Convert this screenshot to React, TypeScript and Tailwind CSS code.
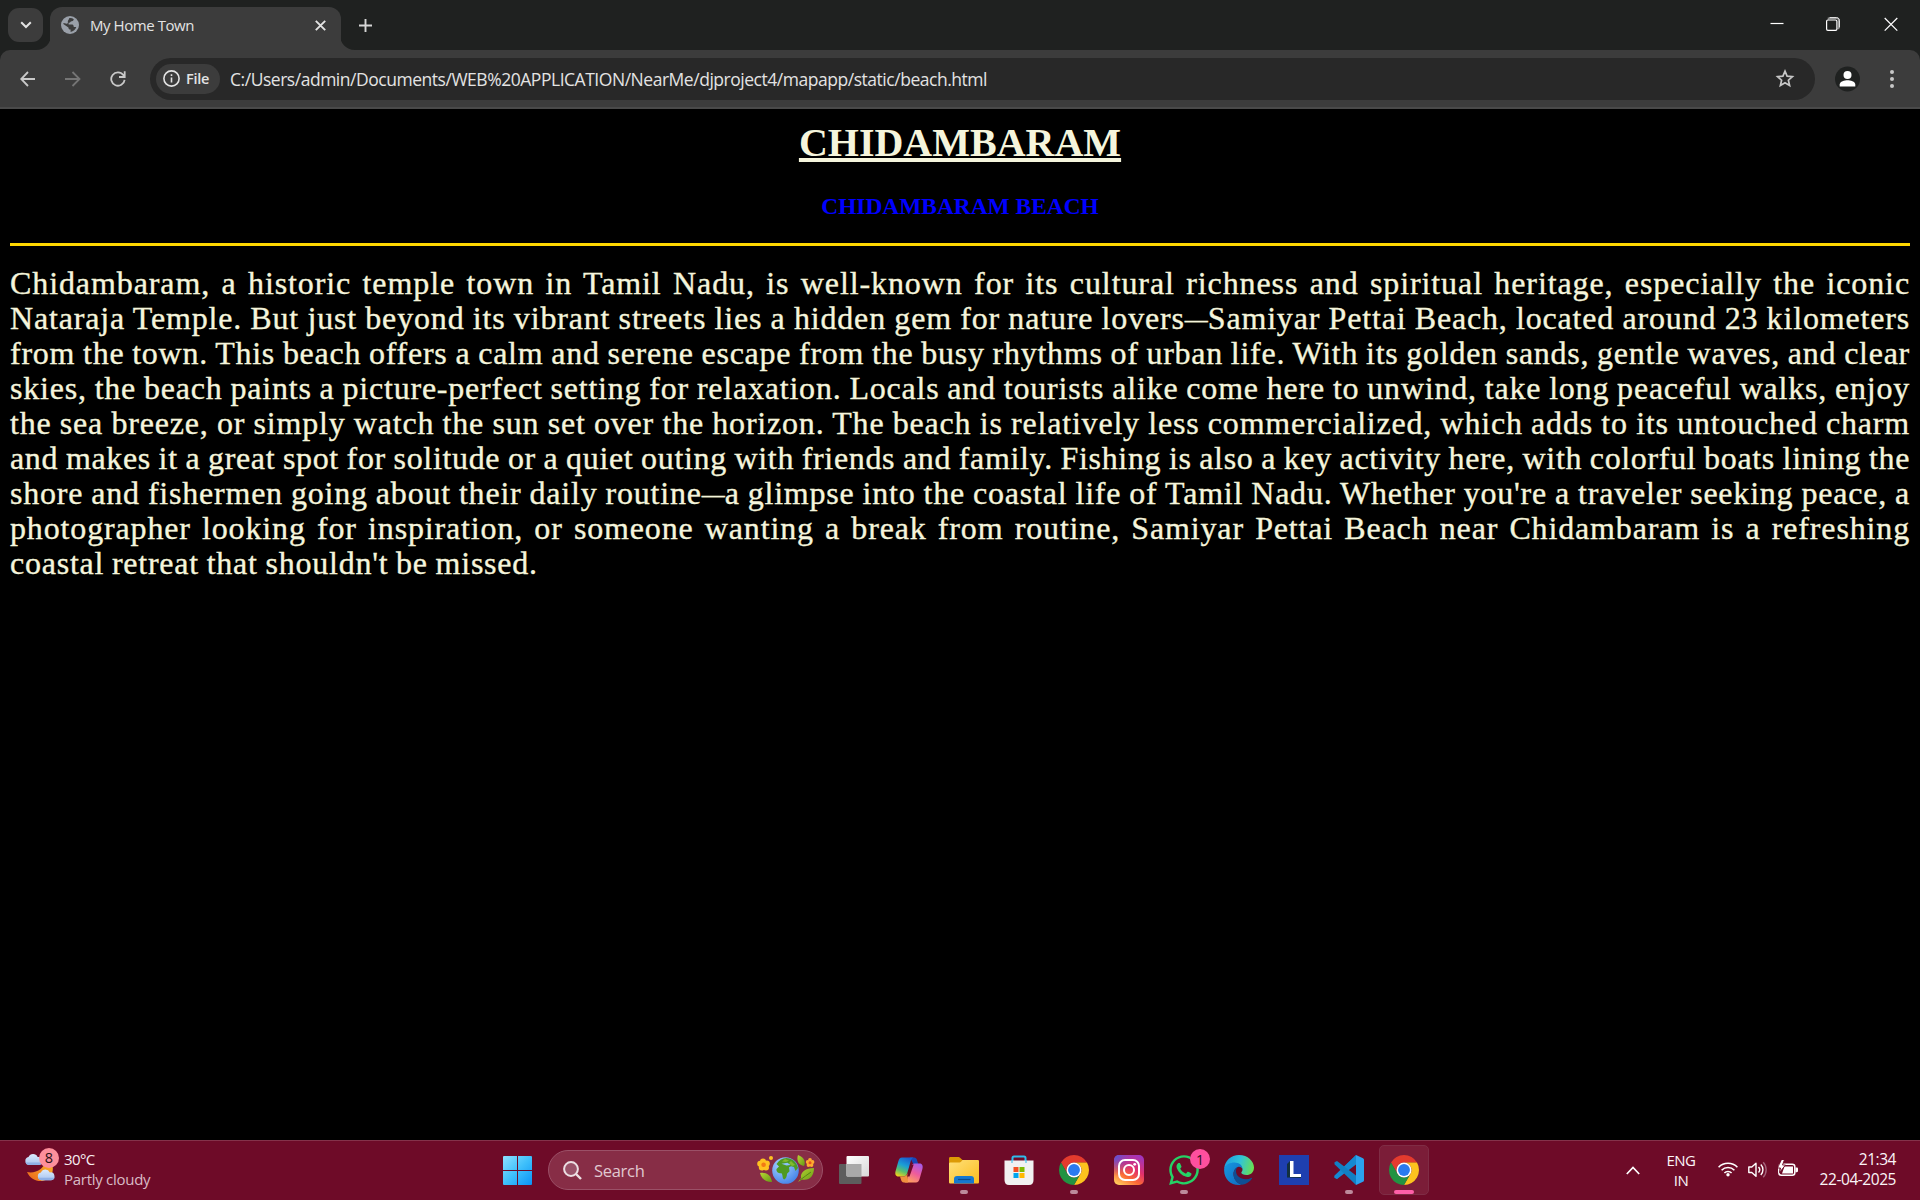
import React from "react";
import { FaWhatsapp } from "react-icons/fa";

const UI = "font-['Open_Sans','Noto_Sans',sans-serif]";

const Dash = () => <span className="relative -top-[2px] text-[23px] leading-none tracking-normal">—</span>;

const lines: { track: string; text: React.ReactNode }[] = [
  { track: "tracking-[0.9px]", text: "Chidambaram, a historic temple town in Tamil Nadu, is well-known for its cultural richness and spiritual heritage, especially the iconic" },
  {
    track: "tracking-[0.83px]",
    text: (
      <>
        Nataraja Temple. But just beyond its vibrant streets lies a hidden gem for nature lovers
        <Dash />
        Samiyar Pettai Beach, located around 23 kilometers
      </>
    ),
  },
  { track: "tracking-[0.74px]", text: "from the town. This beach offers a calm and serene escape from the busy rhythms of urban life. With its golden sands, gentle waves, and clear" },
  { track: "tracking-[0.78px]", text: "skies, the beach paints a picture-perfect setting for relaxation. Locals and tourists alike come here to unwind, take long peaceful walks, enjoy" },
  { track: "tracking-[0.8px]", text: "the sea breeze, or simply watch the sun set over the horizon. The beach is relatively less commercialized, which adds to its untouched charm" },
  { track: "tracking-[0.66px]", text: "and makes it a great spot for solitude or a quiet outing with friends and family. Fishing is also a key activity here, with colorful boats lining the" },
  {
    track: "tracking-[0.78px]",
    text: (
      <>
        shore and fishermen going about their daily routine
        <Dash />
        a glimpse into the coastal life of Tamil Nadu. Whether you're a traveler seeking peace, a
      </>
    ),
  },
  { track: "tracking-[0.85px]", text: "photographer looking for inspiration, or someone wanting a break from routine, Samiyar Pettai Beach near Chidambaram is a refreshing" },
];

function Globe() {
  return (
    <svg width="18" height="18" viewBox="0 0 18 18" className="shrink-0">
      <circle cx="9" cy="9" r="9" fill="#9aa0a9" />
      <path d="M8.2 2.2c1.6-.3 3.4.1 4.6 1-.3 1.6-1.500 2.200-3 2.300-.4 1-1 1.300-2.200 1.300v1.600h3.600c1.200.3 1.600 1.200 1.500 2.500l2.600.1c-.8 2.600-2.900 4.500-5.700 4.900v-2.300c-1.300 0-2.100-.7-2.200-2.200L2.300 8c.1-.5.1-.7.3-1.100l3.200.9c1.300-.2 1.200-1.400 1-2.200.1-1.400 1.100-1.600 1.400-3.400z" fill="#3c3c3c" />
    </svg>
  );
}

function TabStrip() {
  return (
    <div className="flex h-[50px] bg-[#1f2120]">
      <div className="ml-2 mt-2 flex h-[34px] w-[35px] items-center justify-center rounded-[11px] bg-[#3c3c3c]">
        <svg width="12" height="8" viewBox="0 0 12 8" fill="none" stroke="#e3e3e3" strokeWidth="2"><path d="M1.200 1.200 6 6l4.800-4.800" /></svg>
      </div>
      <svg width="15" height="15" viewBox="0 0 15 15" className="-ml-[7px] mr-[-1px] self-end shrink-0"><path d="M0 15h15V0C15 8 9 15 0 15z" fill="#3c3c3c" /></svg>
      <div className="mt-[7px] flex w-[291px] items-center rounded-t-[12px] bg-[#3c3c3c] pb-[7px] pl-[11px]">
        <Globe />
        <span className={`${UI} ml-[11px] w-[221px] whitespace-nowrap text-[15px] leading-5 tracking-[-0.440px] text-[#e3e3e3]`}>My Home Town</span>
        <svg width="11" height="11" viewBox="0 0 11 11" className="ml-[4px]" stroke="#e3e3e3" strokeWidth="1.900"><path d="M.8.8l9.400 9.400M10.200.8L.8 10.200" /></svg>
      </div>
      <svg width="15" height="15" viewBox="0 0 15 15" className="-ml-px self-end shrink-0"><path d="M15 15H0V0C0 8 6 15 15 15z" fill="#3c3c3c" /></svg>
      <svg width="13" height="13" viewBox="0 0 13 13" className="ml-[4px] mt-[19px]" stroke="#d6d6d6" strokeWidth="1.900"><path d="M6.500 0v13M0 6.500h13" /></svg>
      <div className="ml-auto mr-[22px] mt-[17px] flex items-start">
        <svg width="14" height="14" viewBox="0 0 14 14"><path d="M.5 6.500h13" stroke="#fff" strokeWidth="1.200" /></svg>
        <svg width="14" height="14" viewBox="0 0 14 14" className="ml-[42px]" fill="none"><path d="M2.500 2.500V1.200h8c1.200 0 2.200 1 2.200 2.200v8h-1.200" stroke="#8c8d8d" strokeWidth="1.500" /><path d="M3.500.6h7.200c1.500 0 2.700 1.200 2.700 2.700v7.200" stroke="#fff" strokeWidth=".9" /><rect x=".6" y="3" width="10.300" height="10.300" rx="1.300" stroke="#fff" strokeWidth="1.200" fill="#1f2120" /></svg>
        <svg width="14" height="14" viewBox="0 0 14 14" className="ml-[44px]" stroke="#fff" strokeWidth="1.200"><path d="M.7 1l12.600 12.600M13.300 1L.7 13.600" /></svg>
      </div>
    </div>
  );
}

function Toolbar() {
  return (
    <div className="bg-[#1f2120]">
      <div className="flex h-[59px] items-center rounded-t-[10px] border-b-2 border-[#4a4a4a] bg-[#3c3c3c]">
        <svg width="16" height="16" viewBox="0 0 16 16" className="ml-5" fill="none" stroke="#c9c9c9" strokeWidth="1.800"><path d="M15 8H1.500M8 1 1.200 8 8 15" /></svg>
        <svg width="16" height="16" viewBox="0 0 16 16" className="ml-[29px]" fill="none" stroke="#757575" strokeWidth="1.800"><path d="M0 8h14M7.500 1l7 7-7 7" /></svg>
        <svg width="16" height="16" viewBox="0 0 16 16" className="ml-[29px]" fill="none" stroke="#c9c9c9" strokeWidth="1.800"><path d="M14.600 8.800A6.700 6.700 0 1 1 13.300 4L14.500 6M9 6h5.700V.3" /></svg>
        <div className="ml-[24px] flex h-[42px] w-[1665px] items-center rounded-full bg-[#282828] pl-[6px]">
          <div className="flex h-[30px] w-[64px] items-center rounded-full bg-[#3c3c3c] pl-[7px]">
            <svg width="17" height="17" viewBox="0 0 17 17" fill="none" stroke="#e3e3e3"><circle cx="8.500" cy="8.500" r="7.600" strokeWidth="1.600" /><path d="M8.500 7.500v5M8.500 4.300v1.700" strokeWidth="1.600" /></svg>
            <span className={`${UI} ml-[6px] text-[14.500px] font-semibold leading-5 tracking-[-0.300px] text-[#e3e3e3]`}>File</span>
          </div>
          <span className={`${UI} ml-[10px] mt-px whitespace-nowrap text-[17.500px] leading-6 tracking-[-0.470px] text-[#e3e3e3]`}>C:/Users/admin/Documents/WEB%20APPLICATION/NearMe/djproject4/mapapp/static/beach.html</span>
          <svg width="20" height="19" viewBox="0 0 20 19" className="ml-auto mr-[20px]" fill="none" stroke="#c7c7c7" strokeWidth="1.700"><path d="M10 2.200l2.100 5 5.300.5-4 3.500 1.200 5.300L10 13.700l-4.600 2.800 1.200-5.300-4-3.500 5.300-.5z" /></svg>
        </div>
        <svg width="26" height="26" viewBox="0 0 26 26" className="ml-5"><circle cx="12.500" cy="13" r="12.500" fill="#1f2120" /><circle cx="12.500" cy="9" r="4" fill="#fff" /><path d="M4.700 20.500v-2c0-3 5-4.300 7.800-4.300s7.800 1.300 7.800 4.300v2z" fill="#fff" /></svg>
        <svg width="6" height="20" viewBox="0 0 6 20" className="ml-[28px]" fill="#c7c7c7"><circle cx="3" cy="3" r="2" /><circle cx="3" cy="10" r="2" /><circle cx="3" cy="17" r="2" /></svg>
      </div>
    </div>
  );
}

function Page() {
  return (
    <main className="h-[1031px] bg-black px-[10px] pt-[11px] text-center font-['Liberation_Serif',serif]">
      <h1 className="mx-auto h-[46px] text-[40px] font-bold leading-[46px] text-[#f5f5dc]">
        <span className="underline decoration-[4px] underline-offset-[2px]">CHIDAMBARAM</span>
      </h1>
      <h3 className="mt-[27px] h-[27px] text-[23.400px] font-bold leading-[27px] text-[#0000ff]">CHIDAMBARAM BEACH</h3>
      <hr className="mt-[23px] h-[3px] border-0 bg-[#ffd700]" />
      <p className="mt-[20px] text-left text-[32px] leading-[35px] text-[#f5f5dc] [-webkit-text-stroke:0.350px_#f5f5dc] [word-spacing:-1px]">
        {lines.map((l, i) => (
          <span key={i} className={`block h-[35px] whitespace-nowrap [text-align-last:justify] ${l.track}`}>{l.text}</span>
        ))}
        <span className="block whitespace-nowrap tracking-[0.760px]">coastal retreat that shouldn't be missed.</span>
      </p>
    </main>
  );
}

function Cloud({ x, y, s }: { x: number; y: number; s: number }) {
  return (
    <g transform={`translate(${x} ${y}) scale(${s})`}>
      <path d="M4 11a4 4 0 0 1-.5-7.900A5 5 0 0 1 12.600 3 4 4 0 0 1 14 11z" fill="url(#cloud)" />
      <path d="M.5 8.500A4 4 0 0 0 4 11h10a4 4 0 0 0 3.500-2.500z" fill="#8fb0e6" />
    </g>
  );
}

function Weather() {
  return (
    <div className="flex w-[503px] pl-[24px] pt-[6px]">
      <svg width="37" height="36" viewBox="0 0 37 36">
        <defs>
          <linearGradient id="cloud" x1="0" y1="0" x2="0" y2="1"><stop offset="0" stopColor="#dbeafd" /><stop offset="1" stopColor="#a7c4ee" /></linearGradient>
          <linearGradient id="moon" x1="0" y1="1" x2="1" y2="0"><stop offset="0" stopColor="#e8631a" /><stop offset="1" stopColor="#ffbd2d" /></linearGradient>
        </defs>
        <path d="M3 25c8 2 18-3 19-13 8 2 9 13 3 19C18 37 7 34 3 25z" fill="url(#moon)" />
        <Cloud x={1} y={7} s={1} />
        <Cloud x={13.500} y={22.500} s={0.980} />
        <circle cx="25" cy="11" r="10" fill="#fd8f9b" />
        <text x="25" y="16" textAnchor="middle" fontSize="14.500" fill="#2a1216" fontFamily="Open Sans">8</text>
      </svg>
      <div className={`${UI} ml-[3px] whitespace-nowrap text-[15px] leading-5`}>
        <div className="mt-[2px] tracking-[-0.600px] text-[#f7eef1]">30°C</div>
        <div className="tracking-[-0.280px] text-[#d9bbc5]">Partly cloudy</div>
      </div>
    </div>
  );
}

function EarthDoodle() {
  return (
    <svg width="58" height="30" viewBox="0 0 58 30" className="shrink-0">
      <defs>
        <radialGradient id="sea" cx=".35" cy=".3" r=".8"><stop offset="0" stopColor="#a9d3ff" /><stop offset="1" stopColor="#3f7fe8" /></radialGradient>
        <linearGradient id="leaf" x1="0" y1="0" x2="1" y2="1"><stop offset="0" stopColor="#b9d532" /><stop offset="1" stopColor="#659a15" /></linearGradient>
      </defs>
      <circle cx="28.500" cy="15.500" r="13.300" fill="url(#sea)" />
      <path d="M19.500 9c2.500-4 6-5.800 10-6 4 .2 8 2.500 10 6l1.500 4-2.500 3-1.500-4-3-.8-2 1 .5 4-2.500 2.500c0 3-1.200 5-2.800 5.800-2-.6-1.200-4.500-2.700-6.200-3 .2-5.500-1.300-5-4.300l2.500-2.500z" fill="#4f9a22" />
      <path d="M28 4l4 1.500-3 1.500-4-.500zM34 6l4 4-3 1-3-3z" fill="#83b92c" />
      <path d="M24.500 8.800l6-1 3 2.200-4 .5z" fill="#8dc1fa" />
      <g fill="#ffc220"><circle cx="6" cy="6.500" r="3" /><circle cx="9.800" cy="8.500" r="3" /><circle cx="9" cy="12.500" r="3" /><circle cx="4.800" cy="12.600" r="3" /><circle cx="3.200" cy="8.800" r="3" /><circle cx="14" cy="3" r="2" /></g>
      <circle cx="6.600" cy="9.800" r="2.300" fill="#f27a14" />
      <path d="M3 18c6-1 11 2 12 9-6 0-10-2-12-9z" fill="url(#leaf)" />
      <path d="M41 0c6 2 8 7 6 11-5-1-8-5-6-11z" fill="url(#leaf)" />
      <path d="M57 13c-8 0-14 4-13 10l-3 4 4-2.500c7 1.500 12-3 12-11.500z" fill="url(#leaf)" />
      <path d="M43 25c4-3 7-5 11-8" stroke="#4d7c10" strokeWidth=".8" />
      <g fill="#ffab2e"><circle cx="53" cy="5" r="1.900" /><circle cx="55.500" cy="7" r="1.900" /><circle cx="54.500" cy="10" r="1.900" /><circle cx="51.500" cy="10" r="1.900" /><circle cx="50.700" cy="7" r="1.900" /></g>
      <circle cx="53" cy="7.800" r="1.500" fill="#e8531e" />
    </svg>
  );
}

function Chrome() {
  return (
    <svg width="30" height="30" viewBox="2 2 44 44">
      <path d="M24 13h19.050A22 22 0 0 0 4.950 13l9.520 16.500A11 11 0 0 1 24 13z" fill="#e33b2e" />
      <path d="M33.530 29.500 24 46a22 22 0 0 0 19.050-33H24a11 11 0 0 1 9.530 16.500z" fill="#fcc31e" />
      <path d="M14.470 29.500 4.950 13A22 22 0 0 0 24 46l9.530-16.500a11 11 0 0 1-19.060 0z" fill="#229342" />
      <circle cx="24" cy="24" r="11" fill="#fff" />
      <circle cx="24" cy="24" r="8.700" fill="#2a7af0" />
    </svg>
  );
}

function TaskView() {
  return (
    <svg width="30" height="30" viewBox="0 0 30 30">
      <defs><linearGradient id="tv" x1="0" y1="0" x2="1" y2="1"><stop offset="0" stopColor="#fff" /><stop offset="1" stopColor="#d8d8d8" /></linearGradient></defs>
      <rect x="0" y="9" width="22.500" height="20" rx="1" fill="#5d5d5d" />
      <rect x="7.500" y="1" width="22.500" height="20.500" rx="1" fill="url(#tv)" />
      <path d="M7.500 9h15v12.500h-14a1 1 0 0 1-1-1z" fill="#a9a9a9" />
    </svg>
  );
}

function Copilot() {
  return (
    <svg width="30" height="30" viewBox="0 0 30 30">
      <defs>
        <linearGradient id="cp1" x1=".6" y1="0" x2=".2" y2="1"><stop offset="0" stopColor="#1a5fd0" /><stop offset=".4" stopColor="#1b9fd6" /><stop offset=".7" stopColor="#5cc06a" /><stop offset="1" stopColor="#f3d21c" /></linearGradient>
        <linearGradient id="cp2" x1=".8" y1="0" x2=".3" y2="1"><stop offset="0" stopColor="#a55bea" /><stop offset=".5" stopColor="#ee5b9c" /><stop offset="1" stopColor="#ffa25e" /></linearGradient>
      </defs>
      <path d="M16 2.500h4c2 0 2.800 1.500 3.300 3.500l1 3h-5z" fill="#1747b8" />
      <path d="M8 2.500h11.500c-2 1-2.500 2.500-3.200 5l-3 10.500c-.7 2.500-2 3.500-4 3.500H4.500C1.500 21.500.8 19 1.600 16l2.700-9.500C5 4 6 2.500 8 2.500z" fill="url(#cp1)" />
      <path d="M22 27.500H10.500c2-1 2.500-2.500 3.200-5l3-10.500c.7-2.500 2-3.500 4-3.500h4.800c3 0 3.700 2.500 2.900 5.500l-2.700 9.500c-.7 2.500-1.700 4-3.700 4z" fill="url(#cp2)" />
      <path d="M14 27.500h-4c-2 0-2.600-1.500-3.200-3.500l-.8-2.500h3.500c2 0 3.200-.8 4-3.500z" fill="#f0913e" />
      <path d="M16.700 9.500h3l-4.200 12h-2.300z" fill="#6e0b28" />
    </svg>
  );
}

function Folder() {
  return (
    <svg width="30" height="30" viewBox="0 0 30 30">
      <defs><linearGradient id="fd" x1="0" y1="0" x2="1" y2="1"><stop offset="0" stopColor="#ffe07a" /><stop offset="1" stopColor="#fbbd1e" /></linearGradient></defs>
      <path d="M0 3.500C0 2.500.5 2 1.500 2H9c1 0 1.500.3 2.300 1.100L13.500 5H28c1.300 0 2 .7 2 2v8H0z" fill="#dc9a05" />
      <path d="M0 9c0-1 .3-1.500 1.500-1.500H10c1 0 1.600-.3 2.300-1L13.500 5H28.500c1 0 1.500.5 1.500 1.500V27c0 1-.5 1.500-1.500 1.500h-27C.5 28.500 0 28 0 27z" fill="url(#fd)" />
      <path d="M5 28.500V24c0-2 1-3 3-3h14c2 0 3 1 3 3v4.500z" fill="#1678cf" />
      <path d="M9 24.500h12.500" stroke="#0c4c8e" strokeWidth="1.200" />
    </svg>
  );
}

function Store() {
  return (
    <svg width="30" height="30" viewBox="0 0 30 30">
      <path d="M8.500 8V3c0-1 .5-1.500 1.500-1.500h10c1 0 1.500.5 1.500 1.500v5" fill="none" stroke="#2fbcec" strokeWidth="2" />
      <path d="M.5 5.500h29V25c0 3-1.500 5-4.500 5H5c-3 0-4.500-2-4.500-5z" fill="#f1f1f1" />
      <path d="M8.500 8V5h-1v3zM22.500 8V5h-1v3z" fill="#2fbcec" />
      <rect x="9.500" y="12" width="5" height="5" fill="#f25022" /><rect x="15.500" y="12" width="5" height="5" fill="#7fba00" />
      <rect x="9.500" y="18" width="5" height="5" fill="#00a4ef" /><rect x="15.500" y="18" width="5" height="5" fill="#ffb900" />
    </svg>
  );
}

function Instagram() {
  return (
    <svg width="30" height="30" viewBox="0 0 30 30">
      <defs>
        <linearGradient id="ig" x1=".2" y1="1" x2=".8" y2="0"><stop offset="0" stopColor="#ffc85a" /><stop offset=".3" stopColor="#fb6a35" /><stop offset=".6" stopColor="#e1306c" /><stop offset="1" stopColor="#a035bd" /></linearGradient>
        <radialGradient id="ig2" cx="0" cy="0" r=".7"><stop offset="0" stopColor="#4a5be0" /><stop offset="1" stopColor="#7a3bd0" stopOpacity="0" /></radialGradient>
      </defs>
      <rect width="30" height="30" rx="5" fill="url(#ig)" /><rect width="30" height="30" rx="5" fill="url(#ig2)" />
      <g fill="none" stroke="#fff" strokeWidth="2"><rect x="5" y="5" width="20" height="20" rx="6" /><circle cx="15" cy="15" r="5" /></g>
      <circle cx="20.700" cy="9.300" r="1.400" fill="#fff" />
    </svg>
  );
}

function Edge() {
  return (
    <svg width="30" height="30" viewBox="0 0 30 30">
      <defs>
        <linearGradient id="e1" x1="0" y1=".4" x2="1" y2=".6"><stop offset="0" stopColor="#1f9fe0" /><stop offset=".5" stopColor="#31c4d8" /><stop offset="1" stopColor="#6be04e" /></linearGradient>
        <linearGradient id="e2" x1="0" y1="0" x2="1" y2="1"><stop offset="0" stopColor="#1798e0" /><stop offset="1" stopColor="#0f6ac0" /></linearGradient>
      </defs>
      <path d="M.2 13.500C1 5.500 7 0 15 0c9 0 15 6.500 15 12.500 0 5-3.500 7.500-7.500 7.500-3 0-5.200-1-5.200-2.200 0-.8 1.200-1.300 1.200-3.300 0-3-3-5.800-7.500-5.800C6 8.700 1.500 11 .2 13.500z" fill="url(#e1)" />
      <path d="M.2 13.500C1.500 9.500 6 7.500 10.500 7.500c4.500 0 8 2.800 8 6.500-.5-1.500-2-2.500-3.800-2.300-3 .5-5.200 4-5.200 7.300 0 5 3.500 9 8 10.700C8 31.500-.8 24.500.2 13.500z" fill="url(#e2)" />
      <path d="M14.200 11.700c-2.700.8-4.700 4-4.700 7.300 0 5.500 4 10 8.500 10.700 4.500-.7 8-3 10-6.200.3-.6-.2-.9-.7-.6C20 26.500 11.500 22 12 15.500c.2-2 1-3 2.200-3.800z" fill="#0f4f93" />
    </svg>
  );
}

function Letter() {
  return (
    <svg width="30" height="30" viewBox="0 0 30 30">
      <rect width="30" height="30" fill="#1e3faf" />
      <path d="M8 22.500V9l3-3v13l11 .500V23z" fill="#12303f" />
      <path d="M11 6h3.500v13H22v3H11z" fill="#fff" />
    </svg>
  );
}

function VsCode() {
  return (
    <svg width="30" height="30" viewBox="0 0 30 30">
      <path d="M22 0v8L3 24 .5 22.700v-2z" fill="#1176b8" />
      <path d="M.5 20.700v2L3 24 22 9.500V0z" fill="#1689d1" />
      <path d="M.5 9.300v-2L3 6l19 14.500V30z" fill="#1180c4" />
      <path d="M22 0l7 3.200c.7.300 1 .9 1 1.600v20.400c0 .7-.3 1.300-1 1.600L22 30z" fill="#2ba2ee" />
    </svg>
  );
}

const apps: { icon: React.ReactNode; dot?: boolean; badge?: string; active?: boolean }[] = [
  { icon: <TaskView /> },
  { icon: <Copilot /> },
  { icon: <Folder />, dot: true },
  { icon: <Store /> },
  { icon: <Chrome />, dot: true },
  { icon: <Instagram /> },
  { icon: <FaWhatsapp size={34} color="#25d366" className="shrink-0" />, dot: true, badge: "1" },
  { icon: <Edge /> },
  { icon: <Letter /> },
  { icon: <VsCode />, dot: true },
  { icon: <Chrome />, active: true },
];

function Taskbar() {
  return (
    <footer className="flex h-[60px] border-t border-[#84324a] bg-[#6e0b28]">
      <Weather />
      <svg width="29" height="29" viewBox="0 0 29 29" className="mt-[15px] shrink-0">
        <defs><linearGradient id="win" x1="0" y1="0" x2="1" y2="1"><stop offset="0" stopColor="#8fe1ff" /><stop offset=".5" stopColor="#3fc0fb" /><stop offset="1" stopColor="#0a93f5" /></linearGradient></defs>
        <path d="M0 1a1 1 0 0 1 1-1h13v14H0zM15 0h13a1 1 0 0 1 1 1v13H15zM0 15h14v14H1a1 1 0 0 1-1-1zM15 15h14v13a1 1 0 0 1-1 1H15z" fill="url(#win)" />
      </svg>
      <div className="ml-4 mt-[9px] flex h-[40px] w-[275px] items-center rounded-full border border-[#9b5067] bg-[#872d46] pl-[14px]">
        <svg width="19" height="19" viewBox="0 0 19 19" fill="#9a5269" stroke="#ecdfe3" strokeWidth="2"><circle cx="8" cy="8" r="6.900" /><path d="M13 13l5 5" strokeWidth="2.400" /></svg>
        <span className={`${UI} ml-[12px] mt-[2px] text-[16.500px] leading-6 tracking-[-0.300px] text-[#e0c8d0]`}>Search</span>
        <div className="ml-auto mr-[7px]"><EarthDoodle /></div>
      </div>
      <div className="ml-[3.500px] flex">
        {apps.map((a, i) => (
          <div key={i} className="flex w-[55px] justify-center pt-[4px]">
            <div className={a.active ? "relative flex size-[50px] items-center justify-center rounded-[5px] border border-[#7f2c45] bg-[#7b1d38]" : "relative flex size-[50px] items-center justify-center"}>
              {a.icon}
              {a.dot && <span className="absolute bottom-[1px] left-[21px] h-[4px] w-[8px] rounded-full bg-[#bd8a9b]" />}
              {a.active && <span className="absolute bottom-0 left-[14px] h-[4px] w-[20px] rounded-full bg-[#ff5fa8]" />}
              {a.badge && <span className={`${UI} absolute left-[31px] top-[4px] flex size-[20px] items-center justify-center rounded-full bg-[#ff4f9e] text-[14px] text-[#2a0f1b]`}>{a.badge}</span>}
            </div>
          </div>
        ))}
      </div>
      <div className={`${UI} ml-auto flex text-[15px] leading-5 text-[#fbf5f7]`}>
        <svg width="14" height="9" viewBox="0 0 14 9" className="mt-[25px]" fill="none" stroke="#fff" strokeWidth="1.700"><path d="M.8 8 7 1.500 13.200 8" /></svg>
        <div className="ml-[21px] mt-[9px] w-[40px] text-center tracking-[-0.500px]">ENG<br />IN</div>
        <svg width="20" height="16" viewBox="0 0 20 16" className="ml-[17px] mt-[20px]" fill="none" stroke="#fff" strokeWidth="1.600"><path d="M.6 6.200a13.200 13.200 0 0 1 18.800 0M3.600 9.200a9 9 0 0 1 12.800 0M6.400 12a5 5 0 0 1 7.200 0" /><circle cx="10" cy="13.800" r="1.700" fill="#fff" stroke="none" /></svg>
        <svg width="20" height="18" viewBox="0 0 20 18" className="ml-[10px] mt-[20px]" fill="none" stroke="#fff" strokeWidth="1.400"><path d="M.8 6v5.500h3L8 15.300V2.200L3.800 6z" strokeLinejoin="round" /><path d="M10.500 6a4 4 0 0 1 0 5.500M12.800 3.500a7.500 7.500 0 0 1 0 10.500" /><path d="M15.200 1.200a11 11 0 0 1 0 15" stroke="#a4637a" /></svg>
        <svg width="20" height="17" viewBox="0 0 20 17" className="ml-[10px] mt-[19px]"><rect x=".8" y="4.300" width="16" height="11" rx="2.500" fill="none" stroke="#fff" strokeWidth="1.500" /><path d="M4 13.500 6.500 6.500H15v7H4zM17.500 7.500h1.300c.7 0 1.200.5 1.200 1.200v2.300c0 .7-.5 1.200-1.200 1.200h-1.300z" fill="#fff" /><path d="M3.500-.5-.5 8h3l-1 4.500L7.500 5h-3l2-5.500z" fill="#fff" stroke="#6e0b28" strokeWidth=".9" /></svg>
        <div className="ml-[12px] mr-[24px] mt-[8px] w-[86px] whitespace-nowrap text-right text-[15.500px] tracking-[-0.450px]">21:34<br />22-04-2025</div>
      </div>
    </footer>
  );
}

export default function App() {
  return (
    <div className="flex h-[1200px] w-[1920px] flex-col overflow-hidden bg-black">
      <TabStrip />
      <Toolbar />
      <Page />
      <Taskbar />
    </div>
  );
}
